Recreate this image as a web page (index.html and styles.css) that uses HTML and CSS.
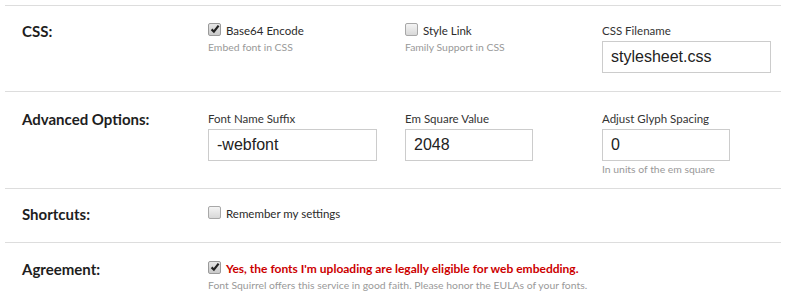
FILE: index.html
```html
<!DOCTYPE html>
<html>
<head>
    <link rel="stylesheet" href="styles.css">
</head>
<body>
    <div class="options">
        <div class="row row-css">
            <div class="row-label">CSS:</div>
            <div class="field">
                <label class="check-line">
                    <span class="box checked">
                        <svg viewBox="0 0 12 12" width="12" height="12"><path d="M2.6 6.4 L4.9 8.7 L9.6 2.6" fill="none" stroke="#222" stroke-width="2.2"/></svg>
                    </span>
                    Base64 Encode
                </label>
                <div class="hint">Embed font in CSS</div>
            </div>
            <div class="field">
                <label class="check-line">
                    <span class="box"></span>
                    Style Link
                </label>
                <div class="hint">Family Support in CSS</div>
            </div>
            <div class="field">
                <div class="field-label">CSS Filename</div>
                <input class="text-input wide" type="text" value="stylesheet.css">
            </div>
        </div>

        <div class="row row-advanced">
            <div class="row-label">Advanced Options:</div>
            <div class="field">
                <div class="field-label">Font Name Suffix</div>
                <input class="text-input wide" type="text" value="-webfont">
            </div>
            <div class="field">
                <div class="field-label">Em Square Value</div>
                <input class="text-input narrow" type="text" value="2048">
            </div>
            <div class="field">
                <div class="field-label">Adjust Glyph Spacing</div>
                <input class="text-input narrow" type="text" value="0">
                <div class="hint">In units of the em square</div>
            </div>
        </div>

        <div class="row row-short">
            <div class="row-label">Shortcuts:</div>
            <div class="field span-all">
                <label class="check-line">
                    <span class="box"></span>
                    Remember my settings
                </label>
            </div>
        </div>

        <div class="row row-agree">
            <div class="row-label">Agreement:</div>
            <div class="field span-all">
                <label class="check-line">
                    <span class="box checked">
                        <svg viewBox="0 0 12 12" width="12" height="12"><path d="M2.6 6.4 L4.9 8.7 L9.6 2.6" fill="none" stroke="#222" stroke-width="2.2"/></svg>
                    </span>
                    <span class="warning">Yes, the fonts I'm uploading are legally eligible for web embedding.</span>
                </label>
                <div class="hint">Font Squirrel offers this service in good faith. Please honor the EULAs of your fonts.</div>
            </div>
        </div>
    </div>
</body>
</html>
```

FILE: styles.css
```css
body {
    margin: 0;
    background: #ffffff;
    color: #222222;
    font-family: Lato, 'Open Sans', sans-serif;
}

.options {
    margin: 5px 5px 0 5px;
    width: 776px;
}

.row {
    display: grid;
    grid-template-columns: 186px 197px 197px 1fr;
    border-top: 1px solid #dddddd;
    padding-left: 17px;
}

.row-css {
    padding-top: 17px;
    height: 68px;
}

.row-advanced {
    padding-top: 19px;
    height: 77px;
}

.row-short {
    padding-top: 17px;
    height: 36px;
}

.row-agree {
    padding-top: 18px;
    height: 44px;
}

.row-label {
    font-size: 15px;
    font-weight: bold;
    line-height: 16px;
    color: #1e1e1e;
}

.span-all {
    grid-column: span 3;
}

.field-label {
    font-size: 11.5px;
    line-height: 15px;
    color: #333333;
    margin-bottom: 3px;
}

.check-line {
    display: flex;
    align-items: center;
    gap: 5px;
    font-size: 11.5px;
    line-height: 16px;
    color: #2a2a2a;
}

.box {
    width: 11px;
    height: 11px;
    border: 1px solid #a8a8a8;
    border-radius: 2px;
    background: linear-gradient(#f4f4f4, #d8d8d8);
    position: relative;
    top: -2px;
    flex-shrink: 0;
}

.box.checked {
    background: linear-gradient(#e6e6e6, #c9c9c9);
    border-color: #9a9a9a;
}

.box svg {
    display: block;
    margin: -1px 0 0 0;
}

.hint {
    font-size: 10.4px;
    line-height: 14px;
    color: #999999;
    margin-top: 1px;
}

.warning {
    color: #cc0000;
    font-weight: bold;
    font-size: 12px;
}

.text-input {
    box-sizing: border-box;
    height: 32px;
    border: 1px solid #cccccc;
    padding: 0 8px;
    font-family: 'Liberation Sans', Arial, sans-serif;
    font-size: 16px;
    color: #222222;
    display: block;
    outline: none;
}

.wide {
    width: 169px;
}

.narrow {
    width: 128px;
}
```
